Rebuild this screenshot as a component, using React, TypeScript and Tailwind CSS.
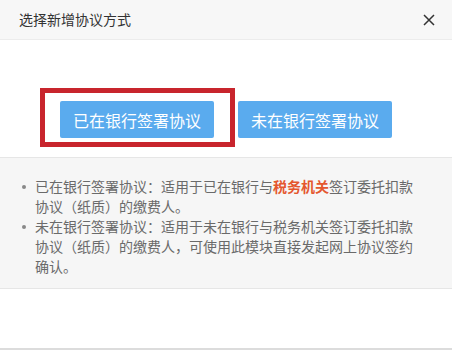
import React from 'react';

const items = [
    {
        label: '已在银行签署协议：适用于已在银行与',
        highlight: '税务机关',
        rest: '签订委托扣款协议（纸质）的缴费人。',
    },
    {
        label: '未在银行签署协议：适用于未在银行与税务机关签订委托扣款协议（纸质）的缴费人，可使用此模块直接发起网上协议签约确认。',
        highlight: '',
        rest: '',
    },
];

const App: React.FC = () => {
    return (
        <div
            className="w-[452px] h-[350px] bg-white flex flex-col overflow-hidden"
            style={{ fontFamily: '"Microsoft YaHei", "Noto Sans CJK SC", "Noto Sans", sans-serif' }}
        >
            {/* Header */}
            <div className="h-[40px] shrink-0 bg-[#f7f7f7] border-b border-[#ececec] flex items-center justify-between pl-[19px] pr-[16px]">
                <span className="text-[14px] text-[#333]">选择新增协议方式</span>
                <button className="w-[14px] h-[14px] flex items-center justify-center text-[#333]">
                    <svg viewBox="0 0 12 12" className="w-[12px] h-[12px]" fill="none" stroke="currentColor" strokeWidth="1.5">
                        <path d="M1 1L11 11M11 1L1 11" />
                    </svg>
                </button>
            </div>

            {/* Buttons */}
            <div className="h-[117px] shrink-0 flex items-start justify-center gap-[24px] pt-[61px]">
                <div className="relative">
                    <button className="block w-[154px] h-[37px] rounded-[2px] bg-[#5aabee] text-white text-[16px]">
                        已在银行签署协议
                    </button>
                    <div className="absolute left-[-20px] right-[-21px] top-[-13px] bottom-[-9px] border-[5px] border-[#c8252d] pointer-events-none" />
                </div>
                <button className="block w-[154px] h-[37px] rounded-[2px] bg-[#5aabee] text-white text-[16px]">
                    未在银行签署协议
                </button>
            </div>

            {/* Notes */}
            <div className="shrink-0 bg-[#f6f6f6] border-t border-b border-[#e6e6e6] pt-[18px] pb-[12px] pl-[35px] pr-[32px]">
                <ul className="text-[14px] leading-[20px] text-[#6a6a6a]">
                    {items.map((item, i) => (
                        <li key={i} className="relative">
                            <span className="absolute left-[-13px] top-[9px] w-[4px] h-[4px] rounded-full bg-[#888]" />
                            {item.label}
                            {item.highlight && <span className="text-[#e4572e] font-bold">{item.highlight}</span>}
                            {item.rest}
                        </li>
                    ))}
                </ul>
            </div>

            {/* Footer */}
            <div className="flex-1 border-b-2 border-[#dcdcdc]" />
        </div>
    );
};

export default App;
